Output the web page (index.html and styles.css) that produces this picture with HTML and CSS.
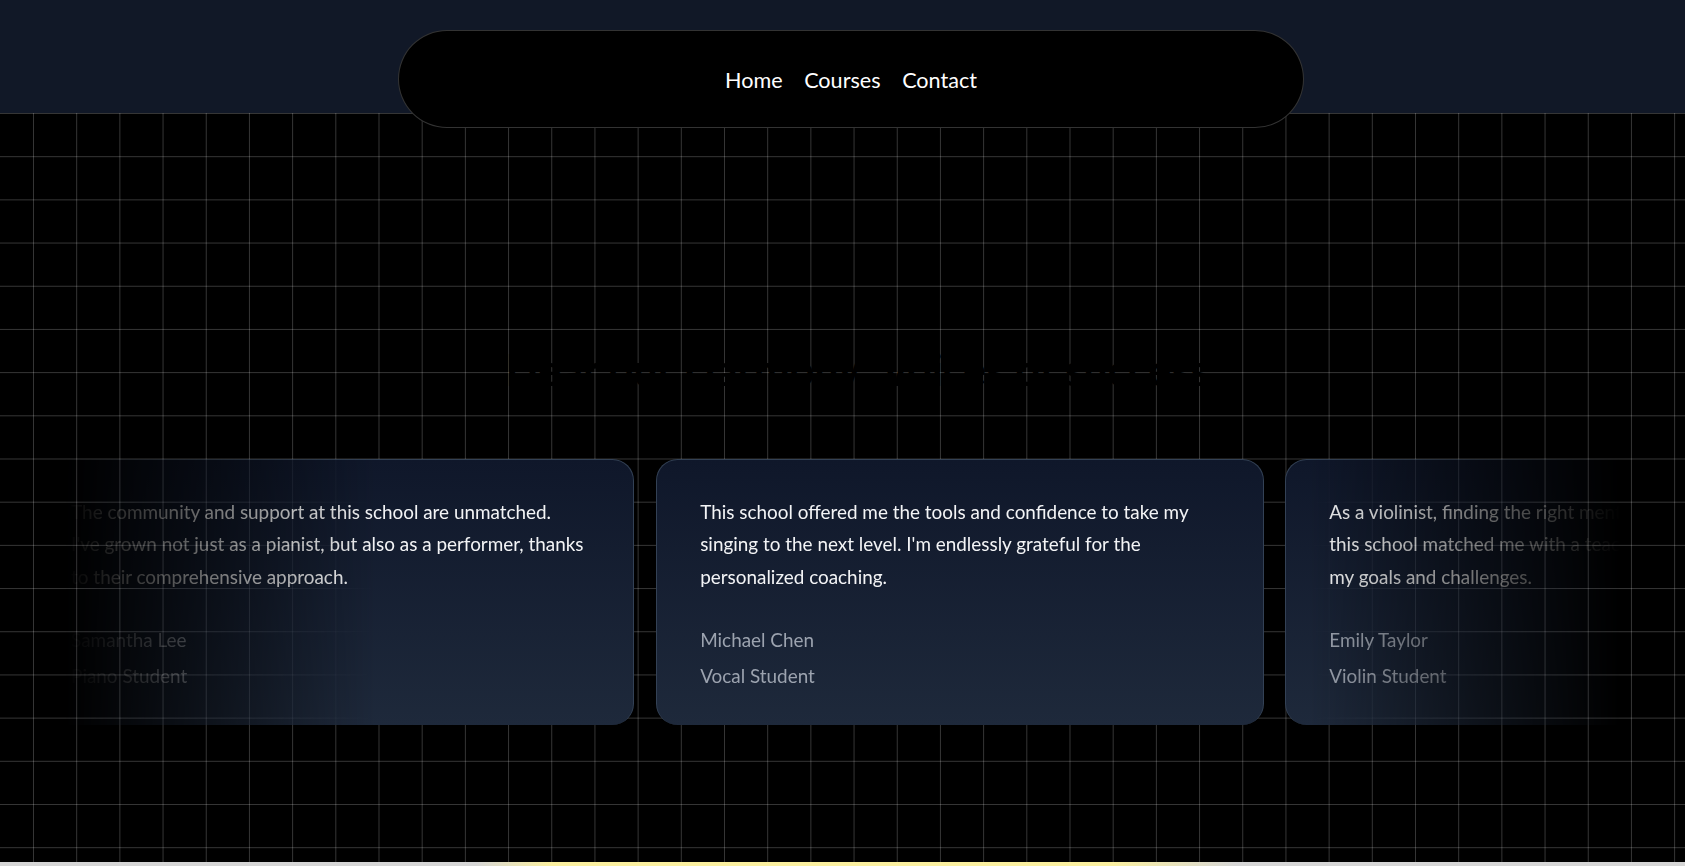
FILE: index.html
```html
<!DOCTYPE html>
<html lang="en">
<head>
<meta charset="utf-8">
<title>Music School – Testimonials</title>
<link rel="stylesheet" href="styles.css">
</head>
<body>
<header class="topbar">
  <nav class="menu">
    <a class="menu-item" href="#">Home</a>
    <a class="menu-item" href="#">Courses</a>
    <a class="menu-item" href="#">Contact</a>
  </nav>
</header>
<section class="testimonials">
  <h2 class="title">Hear our Harmony: Voices of success</h2>
  <div class="outer">
    <div class="inner">
      <div class="scroller">
        <ul class="track">
          <li class="card">
            <blockquote class="quote-block">
              <span class="quote">The community and support at this school are unmatched.<br>I've grown not just as a pianist, but also as a performer, thanks<br>to their comprehensive approach.</span>
              <div class="meta">
                <span class="meta-line">Samantha Lee</span>
                <span class="meta-line">Piano Student</span>
              </div>
            </blockquote>
          </li>
          <li class="card">
            <blockquote class="quote-block">
              <span class="quote">This school offered me the tools and confidence to take my<br>singing to the next level. I'm endlessly grateful for the<br>personalized coaching.</span>
              <div class="meta">
                <span class="meta-line">Michael Chen</span>
                <span class="meta-line">Vocal Student</span>
              </div>
            </blockquote>
          </li>
          <li class="card">
            <blockquote class="quote-block">
              <span class="quote">As a violinist, finding the right mentor can be challenging, but<br>this school matched me with a teacher who truly understands<br>my goals and challenges.</span>
              <div class="meta">
                <span class="meta-line">Emily Taylor</span>
                <span class="meta-line">Violin Student</span>
              </div>
            </blockquote>
          </li>
        </ul>
      </div>
    </div>
  </div>
</section>
<div class="next-edge"></div>
</body>
</html>
```

FILE: styles.css
```css
* { box-sizing: border-box; }

html, body {
  margin: 0;
  padding: 0;
}

body {
  width: 1685px;
  height: 866px;
  overflow: hidden;
  background: #000;
  font-family: Lato, "Liberation Sans", sans-serif;
  display: flex;
  flex-direction: column;
}

.topbar {
  position: relative;
  height: 113px;
  flex-shrink: 0;
  background: #111827;
}

.menu {
  position: absolute;
  top: 30px;
  left: 17px;
  right: 0;
  margin: 0 auto;
  width: 906px;
  height: 98px;
  padding-top: 2px;
  z-index: 50;
  display: flex;
  justify-content: center;
  align-items: center;
  gap: 21.6px;
  background: #000;
  border: 1px solid rgba(255, 255, 255, 0.2);
  border-radius: 9999px;
}

.menu-item {
  color: #fff;
  text-decoration: none;
  font-size: 21.6px;
  line-height: 32.4px;
}

.testimonials {
  height: 749px;
  flex-shrink: 0;
  padding-top: 233px;
  display: flex;
  flex-direction: column;
  background-color: #000;
  background-image:
    linear-gradient(to right, rgba(255, 255, 255, 0.21) 1px, transparent 1px),
    linear-gradient(to bottom, rgba(255, 255, 255, 0.21) 1px, transparent 1px);
  background-size: 43.2px 43.2px;
  background-position: 33px 0;
}

.title {
  position: relative;
  z-index: 10;
  margin: 0 0 43.2px;
  padding-left: 30px;
  text-align: center;
  color: #000;
  font-size: 43px;
  font-weight: 700;
  line-height: 48.6px;
}

.outer {
  display: flex;
  justify-content: center;
  padding: 0 43.2px;
}

.inner {
  width: 100%;
  max-width: 1555.2px;
}

.scroller {
  position: relative;
  z-index: 20;
  overflow: hidden;
  -webkit-mask-image: linear-gradient(to right, transparent, #fff 20%, #fff 80%, transparent);
  mask-image: linear-gradient(to right, transparent, #fff 20%, #fff 80%, transparent);
}

.track {
  list-style: none;
  margin: 0;
  padding: 21.6px 0;
  display: flex;
  gap: 21.6px;
  width: max-content;
  transform: translateX(-38px);
}

.card {
  width: 607.5px;
  flex-shrink: 0;
  padding: 32.4px 43.2px 33.4px;
  border: 1px solid #334155;
  border-bottom: 0;
  border-radius: 21.6px;
  background: linear-gradient(180deg, #0f172a, #1e293b);
}

.quote-block {
  margin: 0;
  padding-top: 2px;
  font-size: 21.6px;
  line-height: 32.4px;
}

.quote {
  font-size: 18.9px;
  line-height: 1.6;
  color: #f3f4f6;
  white-space: nowrap;
}

.meta {
  margin-top: 33.4px;
  display: flex;
  flex-direction: column;
  gap: 5.4px;
}

.meta-line {
  font-size: 18.9px;
  line-height: 1.6;
  color: #9ca3af;
}

.next-edge {
  height: 4px;
  flex-shrink: 0;
  background: linear-gradient(to right, #d6d6d6 0, #d6d6d6 476px, #fbf0a0 551px, #fbf0a0 1110px, #d6d6d6 1236px, #d6d6d6 100%);
}
```
